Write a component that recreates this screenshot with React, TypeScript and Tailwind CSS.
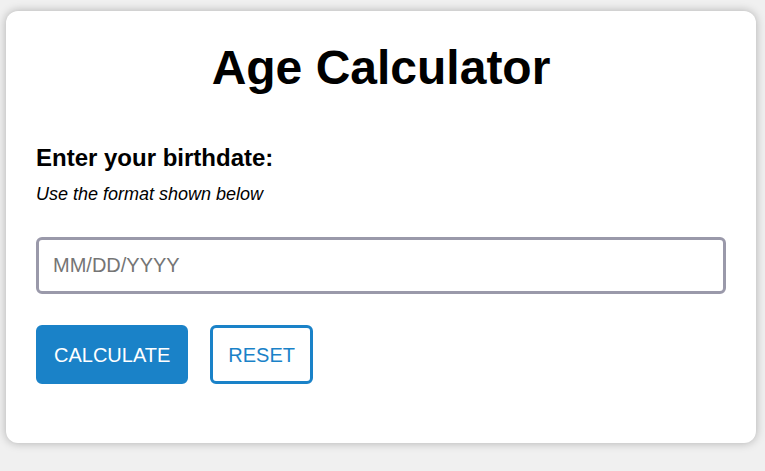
import { useState } from "react";

const AgeCalculator = () => {
  const [birthdate, setBirthdate] = useState("");

  return (
    <div className="min-h-[471px] bg-[#f0f0f0] pt-[11px] pl-[6px]" style={{ fontFamily: '"Liberation Sans", Arial, sans-serif' }}>
      <div className="w-[750px] h-[432px] bg-white rounded-[12px] shadow-[0_0_10px_rgba(0,0,0,0.28)] px-[30px] pt-[29px]">
        <h1 className="text-[48px] leading-[55px] font-bold text-black text-center">Age Calculator</h1>
        <h2 className="mt-[49px] text-[24px] leading-[28px] font-bold text-black">Enter your birthdate:</h2>
        <p className="mt-[12px] text-[18px] leading-[21px] italic text-black">Use the format shown below</p>
        <input
          type="text"
          value={birthdate}
          onChange={(e) => setBirthdate(e.target.value)}
          placeholder="MM/DD/YYYY"
          className="mt-[32px] block w-full h-[57px] border-[3px] border-[#9a99aa] rounded-[6px] px-[14px] text-[20px] text-black placeholder:text-[#757575] outline-none"
        />
        <div className="mt-[31px] flex gap-[22px]">
          <button className="h-[59px] px-[15px] border-[3px] border-[#1a82c8] bg-[#1a82c8] text-white text-[20px] rounded-[6px]">
            CALCULATE
          </button>
          <button
            onClick={() => setBirthdate("")}
            className="h-[59px] px-[15px] border-[3px] border-[#1a82c8] bg-white text-[#1a82c8] text-[20px] rounded-[6px]"
          >
            RESET
          </button>
        </div>
      </div>
    </div>
  );
};

export default AgeCalculator;
